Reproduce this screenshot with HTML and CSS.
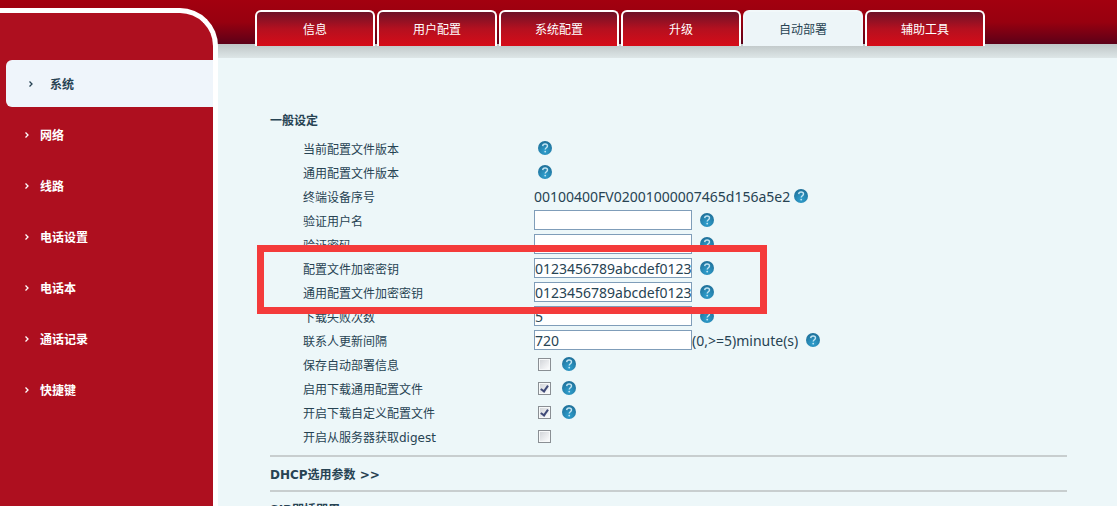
FILE: index.html
```html
<!DOCTYPE html>
<html lang="zh-CN">

<head>
    <meta charset="UTF-8">
    <meta name="viewport" content="width=device-width, initial-scale=1.0">
    <title>自动部署</title>
    <link rel="stylesheet" href="styles.css">
</head>

<body>

    <!-- shared icons -->
    <svg class="sprite" width="0" height="0">
        <defs>
            <radialGradient id="ball" cx="50%" cy="75%" r="75%">
                <stop offset="0" stop-color="#2fa0cf" />
                <stop offset="1" stop-color="#1f6f98" />
            </radialGradient>
        </defs>
        <symbol id="help" viewBox="0 0 14 14">
            <circle cx="7" cy="7" r="7" fill="url(#ball)" />
            <path d="M4.700 5.100C4.800 3.700 5.800 3 7.100 3c1.400 0 2.400.8 2.400 2 0 1.700-2.300 1.800-2.300 3.500" fill="none" stroke="#c3e4f2" stroke-width="1.400" />
            <circle cx="7.200" cy="10.600" r=".9" fill="#c3e4f2" />
        </symbol>
        <symbol id="arrow" viewBox="0 0 6 8">
            <path d="M1.500 1.500L4 4 1.500 6.500" fill="none" stroke="currentColor" stroke-width="1.300" />
        </symbol>
    </svg>

    <div class="page">
        <nav class="sidebar">
            <a href="#" class="active"><svg class="arrow"><use href="#arrow" /></svg>系统</a>
            <a href="#"><svg class="arrow"><use href="#arrow" /></svg>网络</a>
            <a href="#"><svg class="arrow"><use href="#arrow" /></svg>线路</a>
            <a href="#"><svg class="arrow"><use href="#arrow" /></svg>电话设置</a>
            <a href="#"><svg class="arrow"><use href="#arrow" /></svg>电话本</a>
            <a href="#"><svg class="arrow"><use href="#arrow" /></svg>通话记录</a>
            <a href="#"><svg class="arrow"><use href="#arrow" /></svg>快捷键</a>
        </nav>

        <div class="main">
            <nav class="tabs">
                <a href="#">信息</a>
                <a href="#">用户配置</a>
                <a href="#">系统配置</a>
                <a href="#">升级</a>
                <a href="#" class="current">自动部署</a>
                <a href="#">辅助工具</a>
            </nav>

            <form class="content">
                <h3>一般设定</h3>

                <div class="row">
                    <span class="name">当前配置文件版本</span>
                    <svg class="help near"><use href="#help" /></svg>
                </div>
                <div class="row">
                    <span class="name">通用配置文件版本</span>
                    <svg class="help near"><use href="#help" /></svg>
                </div>
                <div class="row">
                    <span class="name">终端设备序号</span>
                    <span class="value">00100400FV02001000007465d156a5e2</span>
                    <svg class="help near"><use href="#help" /></svg>
                </div>
                <div class="row">
                    <label class="name" for="user">验证用户名</label>
                    <input type="text" id="user" class="field">
                    <svg class="help"><use href="#help" /></svg>
                </div>
                <div class="row">
                    <label class="name" for="pass">验证密码</label>
                    <input type="password" id="pass" class="field">
                    <svg class="help"><use href="#help" /></svg>
                </div>

                <div class="keys">
                    <div class="row">
                        <label class="name" for="key">配置文件加密密钥</label>
                        <input type="text" id="key" class="field" value="0123456789abcdef0123">
                        <svg class="help"><use href="#help" /></svg>
                    </div>
                    <div class="row">
                        <label class="name" for="commonKey">通用配置文件加密密钥</label>
                        <input type="text" id="commonKey" class="field" value="0123456789abcdef0123">
                        <svg class="help"><use href="#help" /></svg>
                    </div>
                </div>

                <div class="row">
                    <label class="name" for="fail">下载失败次数</label>
                    <input type="text" id="fail" class="field" value="5">
                    <svg class="help"><use href="#help" /></svg>
                </div>
                <div class="row">
                    <label class="name" for="interval">联系人更新间隔</label>
                    <input type="text" id="interval" class="field" value="720">
                    <span class="value">(0,&gt;=5)minute(s)</span>
                    <svg class="help"><use href="#help" /></svg>
                </div>
                <div class="row">
                    <label class="name" for="save">保存自动部署信息</label>
                    <input type="checkbox" id="save" class="check">
                    <svg class="help"><use href="#help" /></svg>
                </div>
                <div class="row">
                    <label class="name" for="common">启用下载通用配置文件</label>
                    <input type="checkbox" id="common" class="check" checked>
                    <svg class="help"><use href="#help" /></svg>
                </div>
                <div class="row">
                    <label class="name" for="custom">开启下载自定义配置文件</label>
                    <input type="checkbox" id="custom" class="check" checked>
                    <svg class="help"><use href="#help" /></svg>
                </div>
                <div class="row">
                    <label class="name" for="digest">开启从服务器获取digest</label>
                    <input type="checkbox" id="digest" class="check">
                </div>

                <h3 class="section">DHCP选用参数 &gt;&gt;</h3>
                <h3 class="section">SIP即插即用</h3>
            </form>
        </div>
    </div>

</body>

</html>
```
FILE: styles.css
```css
* {
    box-sizing: border-box;
}

body {
    margin: 0;
    font-family: "DejaVu Sans", "Noto Sans CJK SC", sans-serif;
    font-size: 12px;
    color: #274353;
    background-color: #edf7f9;
}

a {
    text-decoration: none;
    color: white;
}

.sprite {
    position: absolute;
}

/* red band on top with its shadow below */
.page {
    display: flex;
    height: 100vh;
    overflow: hidden;
    background-image: linear-gradient(#a3000f, #98000f 50%, #5c0018), linear-gradient(#bfc6c7 44px, #dde6e7);
    background-size: 100% 44px, 100% 58px;
    background-repeat: no-repeat;
}

.sidebar {
    display: flex;
    flex-direction: column;
    flex-shrink: 0;
    gap: 4px;
    width: 218px;
    margin-top: 8px;
    padding-top: 47px;
    border-top: 5px solid white;
    border-right: 5px solid white;
    border-top-right-radius: 38px;
    background-color: #ae0f1f;
}

.sidebar a {
    display: flex;
    align-items: center;
    height: 47px;
    padding-left: 24px;
    font-weight: bold;
}

.sidebar .active {
    margin-left: 6px;
    padding-left: 22px;
    border-radius: 6px 0 0 6px;
    background-color: #eff5fb;
    color: #274353;
}

.arrow {
    width: 6px;
    height: 8px;
    margin-right: 10px;
}

.active .arrow {
    margin-right: 16px;
}

.main {
    flex: 1;
    min-width: 0;
}

.tabs {
    display: flex;
    gap: 2px;
    padding: 10px 0 0 37px;
}

.tabs a {
    width: 120px;
    height: 36px;
    border: 2px solid white;
    border-bottom: none;
    border-radius: 6px 6px 0 0;
    background-image: linear-gradient(#6e1228, #b5101f 50%, #d60c18);
    line-height: 36px;
    text-align: center;
}

.tabs .current {
    border-color: #f2f8fa;
    background: #edf5f8;
    color: #274353;
}

.content {
    padding: 65px 50px 0 52px;
}

h3 {
    margin: 0;
    font-size: 12px;
    line-height: 20px;
}

.content h3:first-child {
    margin-bottom: 5px;
}

.row {
    display: flex;
    align-items: center;
    height: 24px;
    padding-left: 33px;
}

.name {
    width: 231px;
}

.value,
.field {
    font-family: "Noto Sans", sans-serif;
    font-size: 14px;
    color: #274353;
}

.field {
    width: 158px;
    height: 20px;
    padding: 0;
    border: 1px solid #7f9db9;
    background-color: white;
}

.help {
    width: 14px;
    height: 14px;
    margin-left: 8px;
}

.help.near {
    margin-left: 4px;
}

.check {
    appearance: none;
    width: 13px;
    height: 13px;
    margin: 0 3px 0 4px;
    border: 1px solid #8a8f94;
    background: linear-gradient(135deg, #d3d6da, #fbfcfd) content-box, #f7f9fa;
    padding: 1px;
}

.check:checked::before {
    content: "";
    display: block;
    width: 5px;
    height: 8px;
    margin-left: 2px;
    border: solid #3f4a78;
    border-width: 0 2px 2px 0;
    box-sizing: border-box;
    transform: rotate(35deg);
}

.section {
    padding: 8px 0 5px;
    border-top: 2px solid #c8cecf;
}

.row + .section {
    margin-top: 7px;
}

/* red frame round the two key fields */
.keys {
    position: relative;
}

.keys::after {
    content: "";
    position: absolute;
    top: -11px;
    bottom: -10px;
    left: -13px;
    width: 510px;
    box-sizing: border-box;
    border: 7px solid #f43b3b;
    pointer-events: none;
}
```
